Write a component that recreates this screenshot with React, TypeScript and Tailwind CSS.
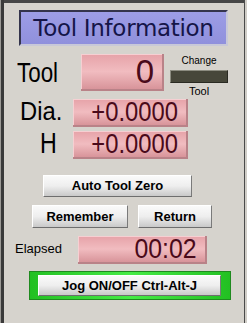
import React from 'react'

const pink =
  'bg-gradient-to-b from-[#e6a2a8] via-[#f1bcc0] to-[#d8949a] border-r-2 border-b-2 border-[#b98288] shadow-[inset_1px_1px_0_#f6cfd2]'

const btn =
  'flex items-center justify-center bg-gradient-to-b from-[#fafafa] via-[#eeeeee] to-[#c9c9c9] border border-t-white border-l-white border-r-[#7a7a7a] border-b-[#6e6e6e] text-[13px] font-bold text-black font-["Liberation_Sans",Arial,sans-serif]'

function Readout({ value, className, text }: { value: string; className: string; text: string }) {
  return (
    <div className={`${pink} ${className} flex items-center justify-end pr-[8px]`}>
      <span className={`${text} inline-block origin-right text-[#4a0a1a] leading-[26px] font-["Liberation_Sans",Arial,sans-serif]`}>
        {value}
      </span>
    </div>
  )
}

export default function App() {
  return (
    <div className="w-[247px] h-[323px] flex bg-[#bdbab4] overflow-hidden">
      <div className="w-[1px] bg-[#9c9a96]" />
      <div className="w-[3px] bg-[#3a3a3a]" />
      <div className="flex-1 flex flex-col">
        <div className="h-[3px] bg-[#464646]" />
        <div className="flex-1 bg-[#d6d3cd] flex flex-col font-['Liberation_Sans',Arial,sans-serif]">
          {/* title */}
          <div className="ml-[15px] mt-[7px] w-[209px] h-[36px] bg-gradient-to-b from-[#9d9de6] to-[#9090dc] border-2 border-t-[#34344c] border-l-[#34344c] border-r-[#c8c8d8] border-b-[#c8c8d8] flex items-center justify-center">
            <span className="text-[23px] leading-none text-[#151548] font-['DejaVu_Sans',Verdana,sans-serif] tracking-[-0.3px]">
              Tool Information
            </span>
          </div>

          {/* tool row */}
          <div className="mt-[8px] h-[37px] flex items-start">
            <div className="w-[77px] pl-[13px] h-[37px] flex items-center">
              <span className="text-[28px] leading-none text-black inline-block origin-left scale-x-[0.8]">Tool</span>
            </div>
            <Readout value="0" className="w-[83px] h-[37px]" text="text-[33px]" />
            <div className="ml-[6px] w-[58px] flex flex-col items-center">
              <span className="text-[10px] leading-[12px] mt-[1px] text-black">Change</span>
              <div className="mt-[3px] w-[58px] h-[13px] bg-[#47473a] border border-t-[#8c8c80] border-l-[#8c8c80] border-r-[#2a2a22] border-b-[#2a2a22]" />
              <span className="text-[11px] leading-[12px] mt-[2px] text-black">Tool</span>
            </div>
          </div>

          {/* dia row */}
          <div className="mt-[8px] h-[28px] flex items-start">
            <div className="w-[69px] pl-[16px] h-[24px] flex items-center">
              <span className="text-[25px] leading-none text-black inline-block origin-left scale-x-[0.95]">Dia.</span>
            </div>
            <Readout value="+0.0000" className="w-[115px] h-[28px]" text="text-[28px] scale-x-[0.85]" />
          </div>

          {/* H row */}
          <div className="mt-[4px] h-[28px] flex items-start">
            <div className="w-[69px] pl-[36px] h-[24px] flex items-center">
              <span className="text-[29px] leading-none text-black inline-block origin-left scale-x-[0.8]">H</span>
            </div>
            <Readout value="+0.0000" className="w-[115px] h-[28px]" text="text-[28px] scale-x-[0.85]" />
          </div>

          <button className={`${btn} ml-[39px] mt-[16px] w-[149px] h-[22px]`}>Auto Tool Zero</button>

          <div className="mt-[8px] ml-[28px] flex gap-[10px]">
            <button className={`${btn} w-[96px] h-[23px]`}>Remember</button>
            <button className={`${btn} w-[74px] h-[23px]`}>Return</button>
          </div>

          {/* elapsed */}
          <div className="mt-[8px] h-[28px] flex items-start">
            <div className="w-[74px] pl-[11px] h-[24px] flex items-center">
              <span className="text-[13px] leading-none text-black">Elapsed</span>
            </div>
            <Readout value="00:02" className="w-[129px] h-[28px]" text="text-[27px] scale-x-[0.92]" />
          </div>

          {/* jog */}
          <div className="mt-[7px] ml-[25px] w-[202px] h-[29px] border border-[#1f8a1f] bg-gradient-to-r from-[#22c022] via-[#46ec46] to-[#22c022] pl-[8px] pr-[9px] py-[3px] flex">
            <button className={`${btn} flex-1 h-full border-[#2f6b2f] border-t-[#2f6b2f] border-l-[#2f6b2f]`}>Jog ON/OFF Ctrl-Alt-J</button>
          </div>
        </div>
      </div>
      <div className="w-[1px] bg-[#4a4a4a]" />
      <div className="w-[2px] bg-[#d0cdc7]" />
    </div>
  )
}
